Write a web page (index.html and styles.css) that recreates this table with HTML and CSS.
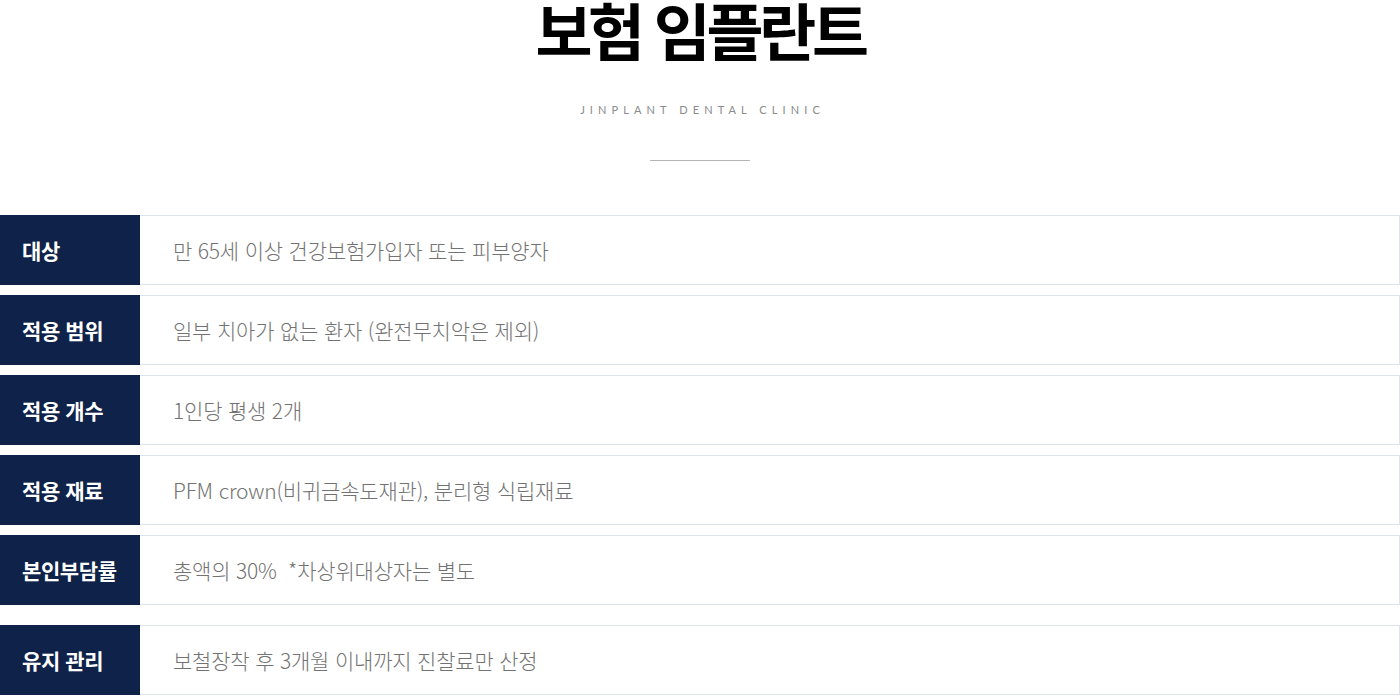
FILE: index.html
```html
<!DOCTYPE html>
<html lang="ko">
<head>
<meta charset="utf-8">
<link rel="stylesheet" href="styles.css">
</head>
<body>
<section class="page">
  <header class="head">
    <h1 class="title">보험 임플란트</h1>
    <p class="sub">JINPLANT DENTAL CLINIC</p>
    <span class="rule"></span>
  </header>
  <div class="rows">
    <div class="row"><div class="label">대상</div><div class="value">만 65세 이상 건강보험가입자 또는 피부양자</div></div>
    <div class="row"><div class="label">적용 범위</div><div class="value">일부 치아가 없는 환자 (완전무치악은 제외)</div></div>
    <div class="row"><div class="label">적용 개수</div><div class="value">1인당 평생 2개</div></div>
    <div class="row"><div class="label">적용 재료</div><div class="value">PFM crown(비귀금속도재관), 분리형 식립재료</div></div>
    <div class="row"><div class="label">본인부담률</div><div class="value">총액의 30% &nbsp;*차상위대상자는 별도</div></div>
    <div class="row last"><div class="label">유지 관리</div><div class="value">보철장착 후 3개월 이내까지 진찰료만 산정</div></div>
  </div>
</section>
</body>
</html>
```

FILE: styles.css
```css
html, body {
  margin: 0;
  padding: 0;
  background: #fff;
}
body {
  font-family: "Noto Sans CJK KR", "Noto Sans", sans-serif;
}
.page {
  width: 1400px;
  overflow: hidden;
}
.head {
  display: flex;
  flex-direction: column;
  align-items: center;
}
.title {
  margin: -16px 0 0;
  font-size: 62px;
  font-weight: 700;
  line-height: 90px;
  letter-spacing: -0.07em;
  color: #000;
}
.sub {
  margin: 29px 0 0;
  font-family: "Lato", "Open Sans", sans-serif;
  font-size: 11px;
  font-weight: 400;
  letter-spacing: 5.1px;
  line-height: 14px;
  color: #8a8a8a;
  padding-left: 5px;
}
.rule {
  display: block;
  width: 100px;
  height: 1px;
  background: #b5b5b5;
  margin-top: 43px;
}
.rows {
  margin-top: 54px;
  display: flex;
  flex-direction: column;
  gap: 10px;
}
.row {
  display: flex;
  height: 70px;
  box-sizing: border-box;
  border: 1px solid #dde4ec;
  border-left: none;
}
.row.last {
  margin-top: 10px;
}
.label {
  width: 140px;
  margin: -1px 0;
  background: #0f2249;
  color: #fff;
  font-size: 21px;
  font-weight: 700;
  letter-spacing: -0.4px;
  display: flex;
  align-items: center;
  padding-left: 22px;
  box-sizing: border-box;
}
.value {
  display: flex;
  align-items: center;
  padding-left: 33px;
  font-size: 21px;
  font-weight: 300;
  letter-spacing: -0.2px;
  color: #727272;
}
```
